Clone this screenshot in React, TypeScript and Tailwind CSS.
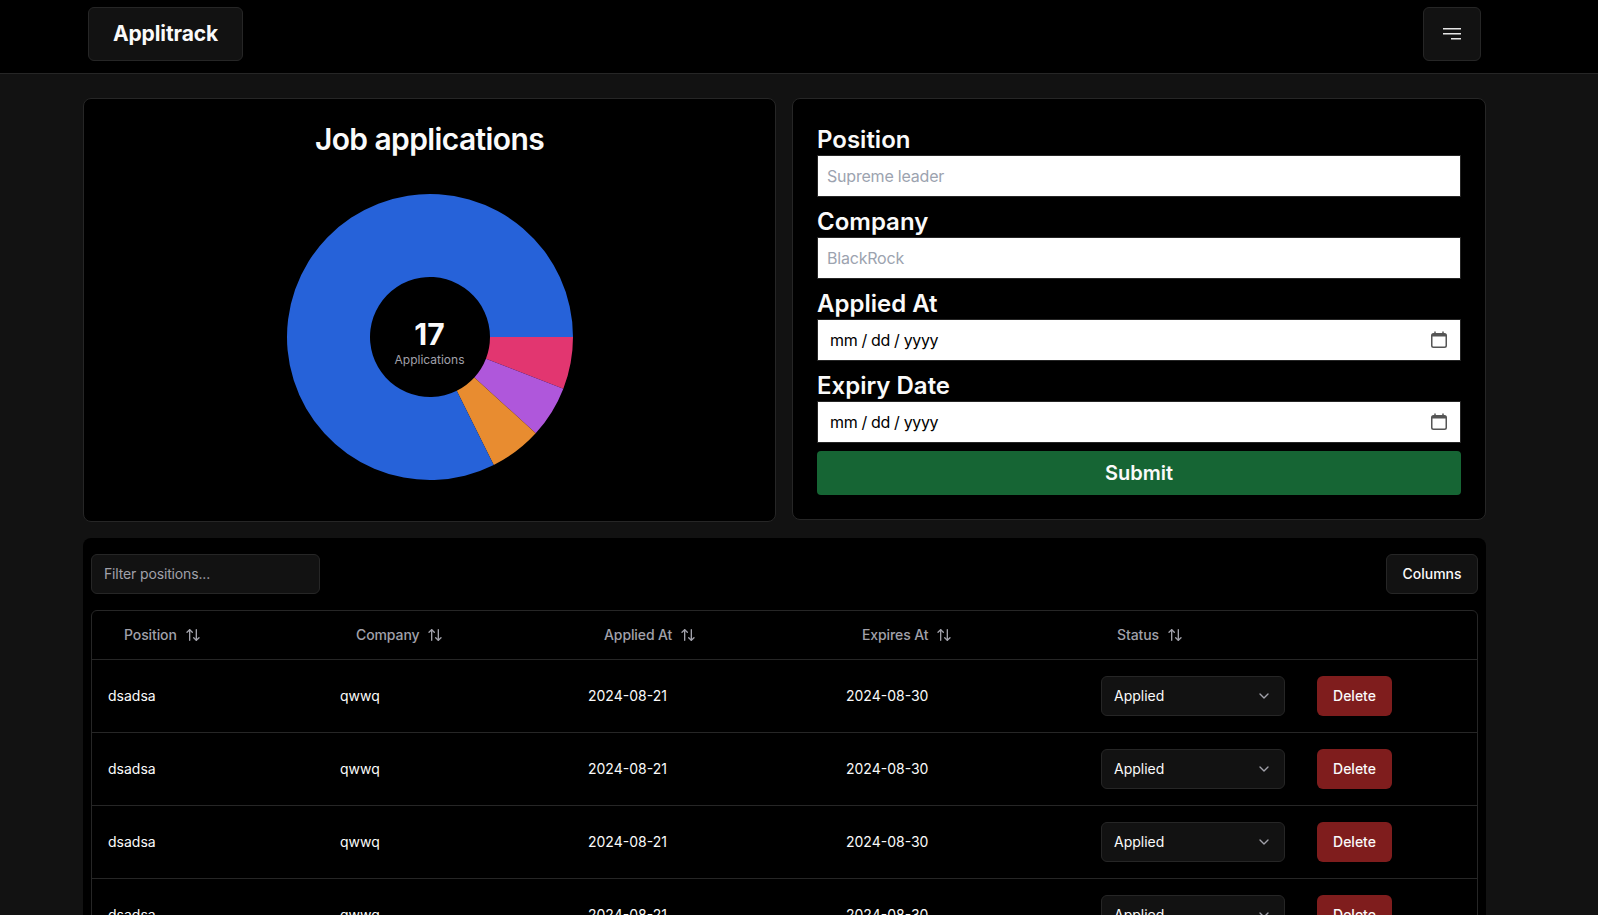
import React from "react";
import { ArrowUpDown, ChevronDown } from "lucide-react";

const font = "font-['Inter','Liberation_Sans',sans-serif]";

function slice(a0: number, a1: number, r0: number, r1: number) {
  const p = (r: number, a: number) => {
    const t = (a * Math.PI) / 180;
    return `${(150 + r * Math.cos(t)).toFixed(2)} ${(150 + r * Math.sin(t)).toFixed(2)}`;
  };
  const large = a1 - a0 > 180 ? 1 : 0;
  return `M${p(r1, a0)} A${r1} ${r1} 0 ${large} 1 ${p(r1, a1)} L${p(r0, a1)} A${r0} ${r0} 0 ${large} 0 ${p(r0, a0)} Z`;
}

const step = 360 / 17;

function Donut() {
  return (
    <div className="relative mt-[26px] w-[300px] h-[300px]">
      <svg width="300" height="300" viewBox="0 0 300 300">
        <path d={slice(0, step, 60, 143)} fill="#e23670" />
        <path d={slice(step, 2 * step, 60, 143)} fill="#af57db" />
        <path d={slice(2 * step, 3 * step, 60, 143)} fill="#e88c30" />
        <path d={slice(3 * step, 360, 60, 143)} fill="#2662d9" />
      </svg>
      <div className="absolute inset-0 flex flex-col items-center justify-center">
        <span className="text-[30px] leading-[36px] font-bold text-[#fafafa] mt-[10px]">17</span>
        <span className="text-xs leading-[16px] text-[#a1a1aa]">Applications</span>
      </div>
    </div>
  );
}

function CalendarIcon() {
  return (
    <svg width="16" height="17" viewBox="0 0 16 17" fill="none" className="text-[#555] mt-[-2px]">
      <rect x="0.75" y="2.75" width="14.5" height="13.5" rx="1.75" stroke="currentColor" strokeWidth="1.5" />
      <rect x="1" y="3" width="14" height="2.5" fill="currentColor" />
      <rect x="3.25" y="0.5" width="1.5" height="3" fill="currentColor" />
      <rect x="11.25" y="0.5" width="1.5" height="3" fill="currentColor" />
    </svg>
  );
}

function Field({ label, children }: { label: string; children: React.ReactNode }) {
  return (
    <div className="flex flex-col mt-2">
      <label className="text-2xl leading-[34px] font-semibold text-[#fafafa] h-[32px]">{label}</label>
      {children}
    </div>
  );
}

function TextField({ label, placeholder }: { label: string; placeholder: string }) {
  return (
    <Field label={label}>
      <input
        placeholder={placeholder}
        className="h-[42px] w-full bg-white border border-[#262626] px-[9px] text-base tracking-[-0.2px] text-black placeholder:text-[#9ca3af] outline-none"
      />
    </Field>
  );
}

function DateField({ label }: { label: string }) {
  return (
    <Field label={label}>
      <div className="h-[42px] w-full bg-white border border-[#262626] pl-[12px] pr-[13px] flex items-center justify-between text-base text-black">
        <span className="tracking-[-0.35px]">mm / dd / yyyy</span>
        <CalendarIcon />
      </div>
    </Field>
  );
}

const rows = [0, 1, 2, 3, 4, 5];

function SortHead({ label, className }: { label: string; className: string }) {
  return (
    <th className={`${className} h-[48px] px-4 text-left font-medium align-middle`}>
      <span className="inline-flex items-center px-4 pb-[2px] text-sm text-[#a1a1aa]">
        <span className="tracking-[-0.1px]">{label}</span>
        <ArrowUpDown className="ml-2 w-4 h-4" strokeWidth={2} />
      </span>
    </th>
  );
}

export default function App() {
  return (
    <div className={`${font} min-h-screen bg-[#121212] text-[#fafafa]`}>
      <header className="h-[74px] bg-black border-b border-[#262626] pl-[88px] pr-[117px] flex items-start pt-[7px] justify-between">
        <div className="w-[155px] h-[54px] bg-[#121212] border border-[#262626] rounded-md flex items-center justify-center text-[21px] tracking-[-0.1px] font-bold text-[#fafafa]">
          Applitrack
        </div>
        <button className="w-[58px] h-[54px] bg-[#121212] border border-[#262626] rounded-md flex items-center justify-center">
          <svg width="18" height="14" viewBox="0 0 18 14" fill="none">
            <rect x="0" y="1" width="18" height="1.5" fill="#e5e5e5" />
            <rect x="0" y="6" width="18" height="1.5" fill="#e5e5e5" />
            <rect x="8" y="11" width="10" height="1.5" fill="#e5e5e5" />
          </svg>
        </button>
      </header>

      <main className="pl-[83px] pr-[112px] pt-[24px]">
        <div className="grid grid-cols-[693px_1fr] gap-4 items-start">
          <section className="h-[424px] bg-black border border-[#262626] rounded-lg flex flex-col items-center pt-[18px]">
            <h2 className="text-3xl leading-[44px] font-semibold tracking-[-0.6px] text-[#fafafa]">Job applications</h2>
            <Donut />
          </section>
          <section className="h-[422px] bg-black border border-[#262626] rounded-lg px-[24px] pt-[16px]">
            <TextField label="Position" placeholder="Supreme leader" />
            <TextField label="Company" placeholder="BlackRock" />
            <DateField label="Applied At" />
            <DateField label="Expiry Date" />
            <button className="mt-[8px] w-full h-[44px] bg-[#166534] rounded-[4px] text-xl font-semibold text-[#fafafa]">
              Submit
            </button>
          </section>
        </div>

        <section className="mt-[16px] bg-black rounded-lg px-[8px] pt-[16px]">
          <div className="flex items-center justify-between h-[40px]">
            <input
              placeholder="Filter positions..."
              className="w-[229px] h-[40px] bg-[#121212] border border-[#262626] rounded-md px-3 pb-[2px] text-sm tracking-[-0.15px] text-[#fafafa] placeholder:text-[#a1a1aa] outline-none"
            />
            <button className="w-[92px] h-[40px] bg-[#121212] border border-[#262626] rounded-md text-sm font-medium text-[#fafafa]">
              Columns
            </button>
          </div>
          <div className="mt-[16px] border border-[#262626] rounded-md overflow-hidden">
            <table className="w-full table-fixed border-collapse">
              <thead>
                <tr className="border-b border-[#262626]">
                  <SortHead label="Position" className="w-[232px]" />
                  <SortHead label="Company" className="w-[248px]" />
                  <SortHead label="Applied At" className="w-[258px]" />
                  <SortHead label="Expires At" className="w-[255px]" />
                  <SortHead label="Status" className="w-[216px]" />
                  <th />
                </tr>
              </thead>
              <tbody>
                {rows.map((r) => (
                  <tr key={r} className="h-[73px] border-b border-[#262626] text-sm text-[#fafafa]">
                    <td className="px-4">dsadsa</td>
                    <td className="px-4">qwwq</td>
                    <td className="px-4">2024-08-21</td>
                    <td className="px-4">2024-08-30</td>
                    <td className="px-4">
                      <div className="w-[184px] h-[40px] bg-[#121212] border border-[#262626] rounded-md pl-3 pr-3 flex items-center justify-between">
                        <span>Applied</span>
                        <ChevronDown className="w-4 h-4 text-[#a1a1aa]" strokeWidth={2} />
                      </div>
                    </td>
                    <td className="px-4">
                      <button className="w-[75px] h-[40px] bg-[#7f1d1d] rounded-md text-sm font-medium text-[#fafafa]">
                        Delete
                      </button>
                    </td>
                  </tr>
                ))}
              </tbody>
            </table>
          </div>
        </section>
      </main>
    </div>
  );
}
